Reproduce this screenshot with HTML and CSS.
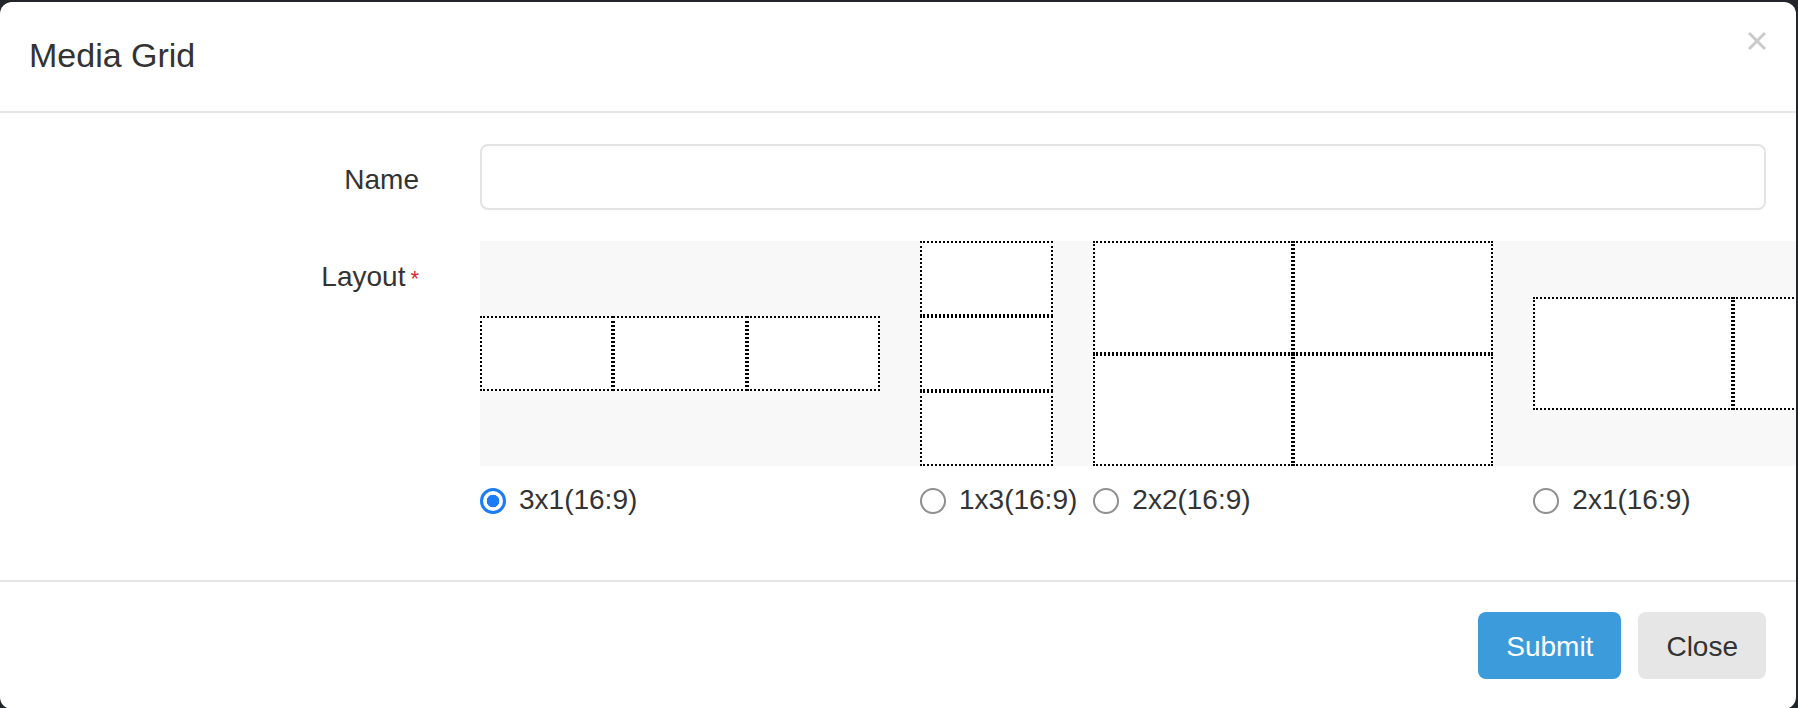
FILE: index.html
```html
<!DOCTYPE html>
<html lang="en">
<head>
<meta charset="utf-8">
<title>Media Grid</title>
<link rel="stylesheet" href="styles.css">
</head>
<body>
<div class="modal">
  <div class="modal-header">
    <h4 class="modal-title">Media Grid</h4>
    <button class="close" type="button" aria-label="Close">
      <svg width="18" height="18" viewBox="0 0 18 18"><path d="M1 1 L17 17 M17 1 L1 17" stroke="#cacaca" stroke-width="3" fill="none"/></svg>
    </button>
  </div>
  <div class="modal-body">
    <form class="form">
      <div class="form-row">
        <label class="form-label">Name</label>
        <div class="form-field"><input class="input" type="text"></div>
      </div>
      <div class="form-row">
        <label class="form-label"><span>Layout</span><span class="req">*</span></label>
        <div class="form-field">
          <div class="layouts">
            <div class="opt">
              <div class="preview"><div class="grid g3x1"><span></span><span></span><span></span></div></div>
              <label class="radio"><span class="dot checked"></span>3x1(16:9)</label>
            </div>
            <div class="opt">
              <div class="preview"><div class="grid g1x3"><span></span><span></span><span></span></div></div>
              <label class="radio"><span class="dot"></span>1x3(16:9)</label>
            </div>
            <div class="opt">
              <div class="preview"><div class="grid g2x2"><span></span><span></span><span></span><span></span></div></div>
              <label class="radio"><span class="dot"></span>2x2(16:9)</label>
            </div>
            <div class="opt">
              <div class="preview"><div class="grid g2x1"><span></span><span></span></div></div>
              <label class="radio"><span class="dot"></span>2x1(16:9)</label>
            </div>
          </div>
        </div>
      </div>
    </form>
  </div>
  <div class="modal-footer">
    <button class="btn btn-primary" type="button">Submit</button>
    <button class="btn btn-default" type="button">Close</button>
  </div>
</div>
</body>
</html>
```
FILE: styles.css
```css
html, body {
  margin: 0;
  height: 100%;
}
body {
  background: #22262a;
  font-family: "Liberation Sans", Arial, sans-serif;
  color: #333;
  overflow: hidden;
}
.modal {
  margin: 2px 2px 0 0;
  width: 1796px;
  background: #fff;
  border-radius: 12px;
  overflow: hidden;
}
.modal-header {
  box-sizing: border-box;
  height: 111px;
  display: flex;
  justify-content: space-between;
  align-items: flex-start;
  padding: 29px 30px 0 29px;
  border-bottom: 2px solid #e5e5e5;
}
.modal-title {
  margin: 0;
  font-size: 34px;
  font-weight: normal;
  line-height: 48px;
  color: #333;
}
.close {
  margin-top: 1px;
  padding: 0;
  border: 0;
  background: none;
  width: 18px;
  height: 18px;
  display: block;
}
.close svg { display: block; }
.modal-body {
  padding: 31px 0 30px;
}
.form-row {
  display: grid;
  grid-template-columns: 449px 1fr;
  margin-bottom: 31px;
}
.form-row:last-child {
  margin-bottom: 30px;
}
.form-label {
  text-align: right;
  padding: 16px 30px 0 0;
  font-size: 28px;
  line-height: 40px;
  color: #333;
  white-space: nowrap;
}
.req {
  color: #e3262b;
  font-size: 22px;
  margin-left: 5px;
}
.form-field {
  padding: 0 30px 0 31px;
  min-width: 0;
}
.input {
  display: block;
  box-sizing: border-box;
  width: 100%;
  height: 66px;
  border: 2px solid #e3e3e3;
  border-radius: 8px;
  background: #fff;
  margin: 0;
}
.layouts {
  display: flex;
}
.opt {
  display: flex;
  flex-direction: column;
  flex: none;
}
.preview {
  height: 225px;
  background: #f8f8f8;
  padding-right: 40px;
  display: flex;
  align-items: center;
}
.grid {
  display: grid;
  background: #fff;
}
.grid span {
  border: 2px dotted #000;
  box-sizing: border-box;
}
.g3x1 {
  grid-template-columns: repeat(3, 133.33px);
  grid-template-rows: 75px;
}
.g1x3 {
  grid-template-columns: 133.33px;
  grid-template-rows: repeat(3, 75px);
}
.g2x2 {
  grid-template-columns: repeat(2, 200px);
  grid-template-rows: repeat(2, 112.5px);
}
.g2x1 {
  grid-template-columns: repeat(2, 200px);
  grid-template-rows: 112.5px;
}
.radio {
  display: flex;
  align-items: center;
  margin-top: 14px;
  font-size: 28px;
  line-height: 40px;
  white-space: nowrap;
  color: #333;
}
.dot {
  flex: none;
  width: 26px;
  height: 26px;
  box-sizing: border-box;
  border-radius: 50%;
  border: 2px solid #8f8f8f;
  background: #fff;
  margin: 2px 13px 0 0;
}
.dot.checked {
  border: 3px solid #1b7cf6;
  background: radial-gradient(circle closest-side, #1b7cf6 60%, #fff 66%);
}
.modal-footer {
  border-top: 2px solid #e5e5e5;
  padding: 30px;
  display: flex;
  justify-content: flex-end;
  gap: 17px;
}
.btn {
  height: 67px;
  padding: 2px 28px 0;
  font-family: "Liberation Sans", Arial, sans-serif;
  font-size: 28px;
  line-height: 65px;
  border: 0;
  border-radius: 8px;
}
.btn-primary {
  background: #3c9bdb;
  color: #fff;
}
.btn-default {
  background: #e6e6e6;
  color: #333;
}
```
